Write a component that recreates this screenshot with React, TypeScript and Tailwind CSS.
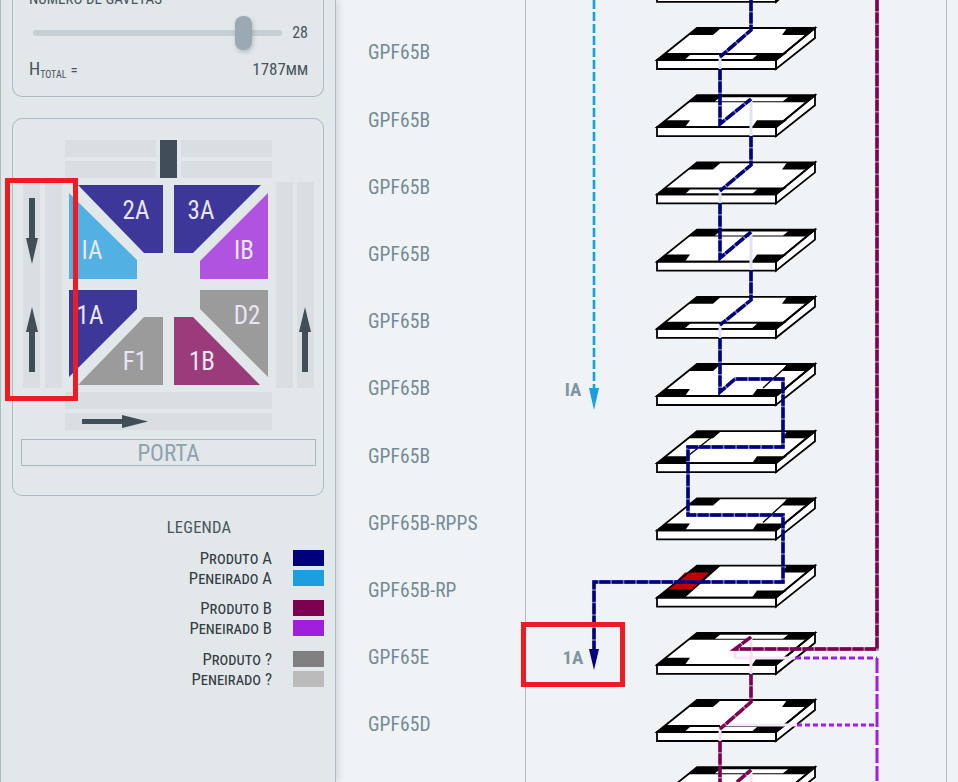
const font = "[font-family:'Roboto',sans-serif] [font-stretch:condensed]";

const TRAY_X = 131; // svg x = page x - 526
const labels = ['GPF65B','GPF65B','GPF65B','GPF65B','GPF65B','GPF65B','GPF65B','GPF65B-RPPS','GPF65B-RP','GPF65E','GPF65D'];

// type of black patches on each tray, from top of the stack
const trayTypes = ['B','A','B','A','B','A','C','D','C','R','B','A','B'];

function Tray({ y, type }: { y: number; type: string }) {
  const p = (pts: number[][]) => pts.map(([a, b]) => `${a + TRAY_X},${b + y}`).join(' ');
  const backLeft = [[40, 0], [64, 0], [56, 7], [31, 7]];
  const backRight = [[130, 0], [158, 0], [148, 7], [125, 7]];
  const frontLeft = [[9, 25], [33, 25], [28, 32], [0, 32]];
  const frontRight = [[100, 25], [130, 25], [119, 32], [95, 32]];
  return (
    <g>
      <polygon points={p([[0, 32], [40, 0], [158, 0], [119, 32]])} fill="#fff" />
      <polygon points={p([[0, 32], [119, 32], [119, 41], [0, 41]])} fill="#fff" />
      <polygon points={p([[119, 32], [158, 0], [158, 10], [119, 41]])} fill="#fff" />
      {type === 'A' && (
        <>
          <polygon points={p(backLeft)} fill="#000" />
          <polygon points={p(backRight)} fill="#000" />
          <polygon points={p([[9, 25], [130, 25], [119, 32], [0, 32]])} fill="#000" />
          <polygon points={p([[33, 27], [100, 27], [95, 31.5], [28, 31.5]])} fill="#fff" />
        </>
      )}
      {type === 'B' && (
        <>
          <polygon points={p([[40, 0], [158, 0], [148, 7], [31, 7]])} fill="#000" />
          <polygon points={p([[63, 2], [131, 2], [126, 6], [58, 6]])} fill="#fff" />
          <polygon points={p(frontLeft)} fill="#000" />
          <polygon points={p(frontRight)} fill="#000" />
        </>
      )}
      {(type === 'C' || type === 'D') && (
        <>
          <polygon points={p(backLeft)} fill="#000" />
          <polygon points={p(backRight)} fill="#000" />
          <polygon points={p(frontLeft)} fill="#000" />
          <polygon points={p(frontRight)} fill="#000" />
        </>
      )}
      {type === 'C' && <polyline points={p([[131, 1], [106, 24]])} fill="none" stroke="#000" strokeWidth="1.4" />}
      {type === 'D' && <polyline points={p([[61, 1], [28, 27]])} fill="none" stroke="#000" strokeWidth="1.4" />}
      {type === 'R' && (
        <>
          <polygon points={p([[40, 0], [64, 0], [28, 32], [0, 32]])} fill="#000" />
          <polygon points={p(backRight)} fill="#000" />
          <polygon points={p(frontRight)} fill="#000" />
          <polygon points={p([[28, 7], [52, 7], [35, 24], [11, 24]])} fill="#c00000" />
        </>
      )}
      <polygon points={p([[0, 32], [40, 0], [158, 0], [119, 32]])} fill="none" stroke="#000" strokeWidth="1.8" />
      <polygon points={p([[0, 32], [119, 32], [119, 41], [0, 41]])} fill="none" stroke="#000" strokeWidth="1.8" />
      <polygon points={p([[119, 32], [158, 0], [158, 10], [119, 41]])} fill="none" stroke="#000" strokeWidth="1.8" />
    </g>
  );
}

// svg coordinates: page x - 526, same y
const navy = '#00007f';
const plum = '#7e0050';
const violet = '#a01fdc';
const cyan = '#1c9fe0';

const navyLine = 'M225 0V30L194 57M194 69V124L225 99M225 136V165L194 191M194 203V258L225 232M225 270V300L194 325M194 338V392L209 379H257V447H162V515H257V582H68V650';
const navyFaint = 'M194 57V69M225 99V136M194 191V203M225 232V270M194 325V338M162 447V460';
const plumLine = 'M351 0V649H209L225 637M225 674V702L194 729M194 741V782M211 782L225 770';
const plumFaint = 'M225 637V674M209 649V658M194 729V741M225 770V782';

function Route({ d, color }: { d: string; color: string }) {
  return (
    <>
      <path d={d} fill="none" stroke={color} strokeWidth="3.4" opacity="0.55" />
      <path d={d} fill="none" stroke={color} strokeWidth="3.4" strokeDasharray="11 1.5" />
    </>
  );
}

function FlowLines() {
  return (
    <svg width="420" height="782" viewBox="0 0 420 782" className="block">
      <path d="M68 0V390" fill="none" stroke={cyan} strokeWidth="2.6" strokeDasharray="9 3" />
      <polygon points="63,388 73,388 68,410" fill={cyan} />
      <text x="47" y="396" textAnchor="middle" fontSize="19" fontWeight="700" fill="#7f95a3" style={{ fontFamily: 'Roboto', fontStretch: 'condensed' }}>IA</text>

      {trayTypes.map((t, i) => (
        <Tray key={i} y={28 + 67.2 * (i - 1)} type={t} />
      ))}

      <path d={navyFaint} fill="none" stroke="#e2e2f2" strokeWidth="3" />
      <Route d={navyLine} color={navy} />
      <polygon points="63,649 73,649 68,670" fill={navy} />
      <text x="47" y="664" textAnchor="middle" fontSize="19" fontWeight="700" fill="#7f95a3" style={{ fontFamily: 'Roboto', fontStretch: 'condensed' }}>1A</text>

      <path d="M209 658H269M194 725H271" fill="none" stroke="#f4e9f8" strokeWidth="3" />
      <path d="M269 658H351" fill="none" stroke={violet} strokeWidth="3" strokeDasharray="6 3" />
      <path d="M351 658V782" fill="none" stroke={violet} strokeWidth="3" strokeDasharray="15 3" />
      <path d="M271 725H351" fill="none" stroke={violet} strokeWidth="3" strokeDasharray="5 3" />
      <path d={plumFaint} fill="none" stroke="#f4e3ee" strokeWidth="3" />
      <Route d={plumLine} color={plum} />
    </svg>
  );
}

function FloorPlan() {
  const bar = '#d8dee2';
  const dark = '#414e57';
  const txt = { fontFamily: 'Roboto', fontStretch: 'condensed', fontSize: 25 } as const;
  // svg origin = page (13, 119)
  return (
    <svg width="310" height="318" viewBox="13 119 310 318" className="block">
      <rect x="65" y="140" width="91" height="17" fill={bar} />
      <rect x="65" y="161" width="91" height="17" fill={bar} />
      <rect x="181" y="140" width="91" height="17" fill={bar} />
      <rect x="181" y="161" width="91" height="17" fill={bar} />
      <rect x="160" y="140" width="17" height="38" fill={dark} />
      <rect x="23" y="182" width="17" height="206" fill={bar} />
      <rect x="45" y="182" width="17" height="206" fill={bar} />
      <rect x="276" y="182" width="17" height="206" fill={bar} />
      <rect x="297" y="182" width="17" height="206" fill={bar} />
      <rect x="65" y="392" width="207" height="17" fill={bar} />
      <rect x="65" y="413" width="207" height="17" fill={bar} />

      <polygon points="78,185 163,185 163,253 144,253" fill="#3c3799" />
      <polygon points="174,185 261,185 193,253 174,253" fill="#3c3799" />
      <polygon points="69,193 137,260 137,279 69,279" fill="#52b1e2" />
      <polygon points="268,193 268,279 200,279 200,261" fill="#b053e0" />
      <polygon points="69,290 137,290 137,309 69,377" fill="#3c3799" />
      <polygon points="144,317 163,317 163,385 78,385" fill="#9b9b9b" />
      <polygon points="174,317 193,317 260,385 174,385" fill="#9a3b7b" />
      <polygon points="200,290 268,290 268,377 200,309" fill="#9b9b9b" />

      <g fill="#e8e6f4" style={txt}>
        <text x="136" y="219" textAnchor="middle">2A</text>
        <text x="201" y="219" textAnchor="middle">3A</text>
        <text x="92" y="259" textAnchor="middle">IA</text>
        <text x="244" y="259" textAnchor="middle">IB</text>
        <text x="90" y="324" textAnchor="middle">1A</text>
        <text x="135" y="370" textAnchor="middle">F1</text>
        <text x="202" y="370" textAnchor="middle">1B</text>
        <text x="247" y="324" textAnchor="middle">D2</text>
      </g>

      <g fill={dark}>
        <polygon points="29,198 35,198 35,238 38,238 32,264 26,238 29,238" />
        <polygon points="32,307 38,332 35,332 35,372 29,372 29,332 26,332" />
        <polygon points="305,307 311,332 308,332 308,372 302,372 302,332 299,332" />
        <polygon points="82,419 122,419 122,415 148,421.5 122,428 122,424 82,424" />
      </g>
    </svg>
  );
}

function LegendRow({ label, color }: { label: string; color: string }) {
  return (
    <div className="flex items-center justify-end h-4 gap-[21px]">
      <span className="text-[#333c42] text-[16.8px] [font-variant-caps:small-caps] leading-none">{label}</span>
      <span className="block w-[31px] h-4" style={{ backgroundColor: color }} />
    </div>
  );
}

export default function App() {
  return (
    <div className={`flex h-[782px] w-[958px] overflow-hidden bg-[#eff3f5] ${font}`}>
      {/* sidebar */}
      <div className="w-[336px] shrink-0 h-full bg-[#e2e7ea] border-l border-l-[#a9bbbb] border-r border-r-[#aebbc3] pl-[11px] pr-[11px] shadow-[3px_0_6px_rgba(90,110,120,0.18)] z-10">
        <div className="h-[98px] -mt-px border border-[#aebbc3] border-t-0 rounded-b-[10px] pl-4 pr-[15px] flex flex-col">
          <div className="text-[15px] text-[#49555c] leading-none -mt-[7px] h-4">NUMERO DE GAVETAS</div>
          <div className="flex items-center mt-[8px] h-[34px]">
            <div className="relative flex-1 ml-1 h-[6px] rounded-full bg-[#c5cfd4]">
              <div className="absolute left-[202px] -top-[14px] w-[17px] h-[34px] rounded-lg bg-[#9baab2] shadow-[1px_2px_4px_rgba(70,90,100,0.3)]" />
            </div>
            <span className="ml-[10px] text-[16px] text-[#49555c]">28</span>
          </div>
          <div className="flex items-baseline justify-between mt-[5px] text-[#49555c] text-[17px]">
            <span><span className="text-[18px]">H</span><sub className="text-[10px]">TOTAL</sub> <span className="text-[15px]">=</span></span>
            <span className="[font-variant-caps:small-caps]">1787mm</span>
          </div>
        </div>

        <div className="mt-[21px] h-[378px] border border-[#aebbc3] rounded-[10px] flex flex-col">
          <FloorPlan />
          <div className="ml-2 mr-[7px] mt-[2px] h-[27px] pt-[3px] border border-[#a9b8bf] flex items-center justify-center text-[23px] text-[#8fa2ae]">PORTA</div>
        </div>

        <div className="mt-[24px] text-center text-[16.5px] tracking-[0.2px] text-[#49555c] leading-none pl-[62px]">LEGENDA</div>
        <div className="mt-[13.5px] flex flex-col">
          <div className="flex flex-col gap-1">
            <LegendRow label="Produto A" color="#00007f" />
            <LegendRow label="Peneirado A" color="#1c9fe0" />
          </div>
          <div className="flex flex-col gap-1 mt-[14px]">
            <LegendRow label="Produto B" color="#7e0050" />
            <LegendRow label="Peneirado B" color="#a01fdc" />
          </div>
          <div className="flex flex-col gap-1 mt-[15px]">
            <LegendRow label="Produto ?" color="#808080" />
            <LegendRow label="Peneirado ?" color="#bbbbbb" />
          </div>
        </div>
      </div>

      {/* main */}
      <div className="flex-1 flex relative">
        <div className="w-[190px] shrink-0 border-r border-[#aebbc3] pl-[32px] pt-[19.5px]">
          {labels.map((l, i) => (
            <div key={i} className="h-[67.2px] flex items-center text-[19.5px] tracking-[0.1px] text-[#748a97]">{l}</div>
          ))}
        </div>
        <div className="w-[421px] shrink-0 border-r border-[#aebbc3]">
          <FlowLines />
        </div>
        {/* red marks laid over the screenshot */}
        <div className="absolute left-[185px] top-[622px] w-[104px] h-[65px] border-[5px] border-[#ed1c24]" />
      </div>
      <div className="absolute left-[5px] top-[178px] w-[73px] h-[223px] border-[5px] border-[#ed1c24] z-20" />
    </div>
  );
}
